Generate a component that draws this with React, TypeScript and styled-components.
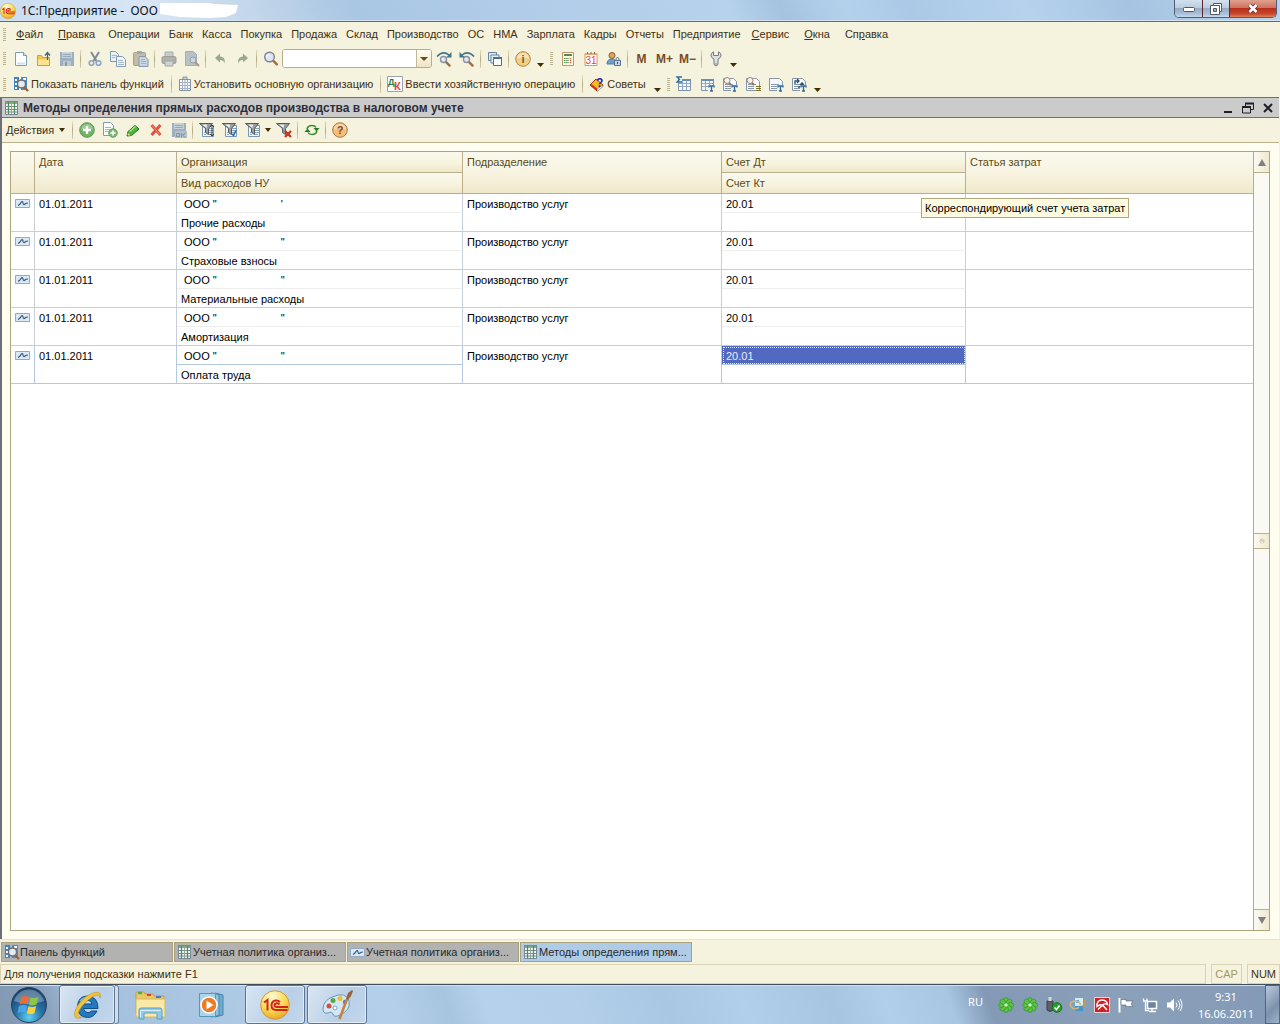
import React, { ReactNode } from 'react';
import styled, { createGlobalStyle, css } from 'styled-components';

const ui = '"Liberation Sans", Arial, sans-serif';
const shell = '"Noto Sans", "Segoe UI", sans-serif';

const Global = createGlobalStyle`
  * { box-sizing: border-box; }
  html, body { margin: 0; height: 100%; }
  body { font: 11px/14px ${ui}; color: #3f3014; background: #f5f2dd; overflow: hidden; }
  button { font: inherit; color: inherit; margin: 0; padding: 0; border: 0; background: none; }
  svg { display: block; flex: none; overflow: visible; }
`;

const Screen = styled.div`
  display: flex;
  flex-direction: column;
  height: 100vh;
`;

/* ---------- application title bar ---------- */

const TitleBar = styled.header`
  display: flex;
  flex: none;
  height: 22px;
  padding-right: 3px;
  border-bottom: 1px solid #566b85;
  box-shadow: inset 0 -1px #d5e4f3;
  background: linear-gradient(
    65deg,
    #c9ddf1 0%, #d8e6f4 12%, #c3d6ea 20%, #a9c6e3 28%, #b0cce8 40%, #b6d2ec 57%,
    #a5c3e0 61%, #b4d1ec 66%, #abc9e6 71%, #b6d2ed 80%, #a6c4e2 88%, #b9d3ec 100%
  );
`;

const AppTitle = styled.h1`
  display: flex;
  flex: 1;
  align-items: center;
  gap: 5px;
  margin: 0;
  font: 12px/20px ${shell};
  color: #10161e;
  white-space: pre;
`;

const Erased = styled.svg`
  margin-left: -8px;
`;

const CaptionButtons = styled.div`
  display: flex;
  height: 18px;
  border: 1px solid #4d5f76;
  border-top: 0;
  border-radius: 0 0 5px 5px;
  overflow: hidden;
`;

const CaptionButton = styled.button<{ $close?: boolean }>`
  display: grid;
  place-items: center;
  width: ${p => (p.$close ? 47 : 27)}px;
  background: ${p =>
    p.$close
      ? 'linear-gradient(#dfa08f 0%, #cf7360 45%, #b8301b 50%, #c8452c 80%, #df8057 100%)'
      : 'linear-gradient(#d3e0ee 0%, #bccde0 45%, #96abc4 50%, #a9bfd8 80%, #c5d8ec 100%)'};
  & + & {
    border-left: 1px solid ${p => (p.$close ? '#5b2a2c' : '#6b7f98')};
  }
`;

/* ---------- menus and toolbars ---------- */

const Bar = styled.div<{ $h: number }>`
  display: flex;
  flex: none;
  align-items: center;
  height: ${p => p.$h}px;
  background: #f5f2dd;
`;

const Grip = styled.span`
  width: 3px;
  height: 13px;
  margin: 0 3px;
  background: repeating-linear-gradient(#bdb491 0 1px, transparent 1px 2px);
`;

const MenuList = styled.nav`
  display: flex;
  align-items: center;
`;

const MenuItem = styled.button<{ $wide?: boolean }>`
  padding: ${p => (p.$wide ? '0 8px 0 7px' : '0 4px 0 5px')};
  line-height: 20px;
  white-space: pre;
`;

const ToolButton = styled.button<{ $dim?: boolean }>`
  display: grid;
  flex: none;
  place-items: center;
  width: 23px;
  height: 22px;
  opacity: ${p => (p.$dim ? 0.75 : 1)};
`;

const TextButton = styled.button<{ $menu?: boolean }>`
  display: flex;
  align-items: center;
  gap: ${p => (p.$menu ? 5 : 2)}px;
  padding: 0 5px 0 4px;
  height: 22px;
  white-space: nowrap;
`;

const Memory = styled(ToolButton)`
  font: bold 12px/14px ${ui};
  color: #7a4b28;
`;

const Divider = styled.span`
  flex: none;
  width: 1px;
  height: 18px;
  margin: 0 2px;
  background: linear-gradient(#e6dfc2, #b3a983, #d8d0ae);
`;

const DropArrow = styled.button<{ $low?: boolean }>`
  display: grid;
  place-items: center;
  width: ${p => (p.$low ? 13 : 8)}px;
  height: 22px;
  padding-top: ${p => (p.$low ? 12 : 0)}px;
`;

const Combo = styled.div`
  display: flex;
  width: 150px;
  height: 19px;
  border: 1px solid #b7ad8a;
  border-radius: 3px;
  background: #fff;
  overflow: hidden;
`;

const ComboInput = styled.input`
  flex: 1;
  min-width: 0;
  border: 0;
  outline: 0;
  padding: 0 4px;
  font: inherit;
`;

const ComboDrop = styled.button`
  display: grid;
  place-items: center;
  width: 15px;
  border-left: 1px solid #c3b994;
  background: linear-gradient(#fffdf3, #ece4c4);
`;

/* ---------- document window ---------- */

const DocWindow = styled.main`
  display: flex;
  flex: 1;
  flex-direction: column;
  min-height: 0;
  margin-right: 1px;
  border: solid #6e6e78;
  border-width: 1px 0 0 2px;
  background: #fffcf0;
`;

const DocTitle = styled.div`
  display: flex;
  flex: none;
  align-items: center;
  gap: 3px;
  height: 20px;
  padding: 0 1px 0 2px;
  border-bottom: 1px solid #6f6f76;
  background: #cbcbcb;
`;

const DocName = styled.h2`
  flex: 1;
  margin: 0;
  font: bold 12px/18px ${ui};
  color: #2b2e38;
`;

const DocButtons = styled.div`
  display: flex;
`;

const DocButton = styled.button`
  display: grid;
  place-items: center;
  width: 20px;
  height: 18px;
`;

const DocTools = styled(Bar)`
  border-bottom: 1px solid #bdb38e;
`;

const GridFrame = styled.div`
  display: flex;
  flex: 1;
  min-height: 0;
  margin: 8px 9px 8px 8px;
  border: 1px solid #aea47f;
  background: #fff;
`;

const GridArea = styled.div`
  flex: 1;
  min-width: 0;
`;

const Table = styled.table`
  width: 100%;
  table-layout: fixed;
  border-collapse: separate;
  border-spacing: 0;
`;

const Col = styled.col<{ $w?: number }>`
  width: ${p => (p.$w ? `${p.$w}px` : 'auto')};
`;

const Th = styled.th<{ $last?: boolean }>`
  height: 21px;
  padding: 3px 4px 0;
  border: solid #b9af8a;
  border-width: 0 ${p => (p.$last ? 0 : 1)}px 1px 0;
  background: linear-gradient(#faf9ee, #f7f3df 55%, #efe8cb);
  font-weight: normal;
  text-align: left;
  vertical-align: top;
  color: #5a4a14;
`;

const Td = styled.td<{ $soft?: boolean; $last?: boolean; $current?: boolean; $selected?: boolean }>`
  position: relative;
  height: 19px;
  padding: 3px 4px 0;
  border: solid ${p => (p.$current ? '#b4c9dc' : '#c8ced6')};
  border-width: 0 ${p => (p.$last ? 0 : 1)}px 1px 0;
  ${p => p.$soft && !p.$current && css`border-bottom-color: #eeeeee;`}
  line-height: 14px;
  vertical-align: top;
  white-space: pre;
  color: #000;
  ${p =>
    p.$selected &&
    css`
      background: #5169c1;
      background-clip: padding-box;
      color: #e6ebff;
      outline: 1px dotted #dfe5ff;
      outline-offset: -2px;
    `}
`;

const RowMark = styled.span`
  display: block;
  padding-top: 2px;
`;

const Blank = styled.span<{ $w: number }>`
  display: inline-block;
  width: ${p => p.$w}px;
`;

const Tooltip = styled.div`
  position: absolute;
  z-index: 2;
  left: 199px;
  top: 4px;
  padding: 2px 3px;
  border: 1px solid #b1a77d;
  background: #fefadf;
  line-height: 14px;
  color: #000;
`;

const Scroll = styled.div`
  display: flex;
  flex-direction: column;
  justify-content: space-between;
  width: 16px;
  border-left: 1px solid #b5ab86;
  background: #faf9f4;
`;

const ScrollPart = styled.button<{ $h: number; $edge: 'top' | 'bottom' | 'both' }>`
  display: grid;
  place-items: center;
  height: ${p => p.$h}px;
  border: solid #b9af8a;
  border-width: ${p => (p.$edge === 'top' ? '0 0 1px' : p.$edge === 'bottom' ? '1px 0 0' : '1px 0')};
  background: linear-gradient(90deg, #fbfaf1, #efe9cf);
`;

/* ---------- open windows, status line ---------- */

const WindowTabs = styled.div`
  display: flex;
  flex: none;
  gap: 1px;
  height: 25px;
  padding: 2px 1px;
  border-top: 1px solid #e2e2de;
`;

const WindowTab = styled.button<{ $active?: boolean }>`
  display: flex;
  align-items: center;
  width: 172px;
  height: 20px;
  padding: 0 2px;
  border: 1px solid #aaa17f;
  background: ${p => (p.$active ? '#b0cbe6' : '#b2b2b1')};
  color: #27292c;
  white-space: nowrap;
`;

const StatusLine = styled.footer`
  display: flex;
  flex: none;
  gap: 5px;
  height: 20px;
`;

const StatusCell = styled.div<{ $grow?: boolean; $dim?: boolean }>`
  flex: ${p => (p.$grow ? '1' : '0 0 auto')};
  min-width: 29px;
  padding: 0 3px;
  border: 1px solid #d9d2b4;
  line-height: 18px;
  color: ${p => (p.$dim ? '#a59764' : '#3f3014')};
`;

/* ---------- system taskbar ---------- */

const Taskbar = styled.div`
  display: flex;
  flex: none;
  height: 40px;
  border-top: 1px solid #3f4d5d;
  box-shadow: inset 0 1px #cfe0f0;
  background: linear-gradient(
    70deg,
    #8198b3 0%, #8aa1bc 4%, #a4bfdb 7%, #b2cde8 24%, #b3cfea 31%, #a8c5e0 35%, #b5d1eb 38%, #b3cfea 45%,
    #a9c7e3 52%, #b1cfea 58%, #a7c4e1 65%, #b1cfea 69%, #a8c6e2 74%, #8399b5 77%, #8ba0b9 88%, #8299b6 100%
  );
`;

const Start = styled.button`
  display: grid;
  place-items: center;
  width: 57px;
`;

const Task = styled.button<{ $w: number; $open?: boolean }>`
  display: grid;
  place-items: center;
  width: ${p => p.$w}px;
  margin-left: 2px;
  border-radius: 3px;
  ${p =>
    p.$open &&
    css`
      border: 1px solid #5c7491;
      box-shadow: inset 0 0 0 1px #e3edf7;
      background: linear-gradient(120deg, #d9e6f3, #b9cfe6 60%, #c3d8ec);
    `}
`;

const TaskStack = styled.span`
  width: 4px;
  border: 1px solid #6b829e;
  border-left: 0;
  border-radius: 0 3px 3px 0;
  background: #d0dfee;
`;

const Tray = styled.div`
  display: flex;
  align-items: center;
  margin-left: auto;
  font: 11px/17px ${shell};
  color: #fff;
`;

const TrayIcons = styled.div`
  display: flex;
  gap: 8px;
  margin: 0 5px 0 15px;
`;

const Language = styled.button`
  padding-bottom: 6px;
`;

const Clock = styled.time`
  width: 78px;
  text-align: center;
`;

const ShowDesktop = styled.button`
  align-self: stretch;
  width: 15px;
  border: 1px solid #52667f;
  background: linear-gradient(135deg, #b8c9db, #7c92ad 60%, #9db3ca);
`;

/* ---------- drawings ---------- */

const Svg = ({ w = 16, h = 16, children }: { w?: number; h?: number; children: ReactNode }) => (
  <svg width={w} height={h} viewBox={`0 0 ${w} ${h}`} fill="none" aria-hidden="true">
    {children}
  </svg>
);

const Down = ({ c = '#3f2c00', w = 7 }: { c?: string; w?: number }) => (
  <svg width={w} height="4" viewBox="0 0 8 4" preserveAspectRatio="none" aria-hidden="true"><path d="M0 0h8L4 4z" fill={c} /></svg>
);

const Sheet = ({ x = 2.5, y = 1.5, w = 10, h = 13, f = '#fdfeff' }) => (
  <path d={`M${x} ${y}h${w - 3}l3 3v${h - 3}h-${w}z`} fill={f} stroke="#7f9bb8" />
);

const Loupe = ({ x = 6.5, y = 6.5, r = 4, c = '#8a8f9c' }) => (
  <>
    <path d={`M${x + r * 0.7} ${y + r * 0.7}l4 4`} stroke="#a56d42" strokeWidth="2.4" strokeLinecap="round" />
    <circle cx={x} cy={y} r={r} fill="#dbe8f3" stroke={c} strokeWidth="1.4" />
    <path d={`M${x - r / 2} ${y}q0-${r / 2} ${r / 2}-${r / 2}`} stroke="#fff" />
  </>
);

const NewIcon = () => <Svg><Sheet w={11} /><path d="M10.500 1.500v3h3" stroke="#7f9bb8" fill="#d5e3f0" /><path d="M4 12.500h8" stroke="#d3e1ef" strokeWidth="2" /></Svg>;
const OpenIcon = () => (
  <Svg>
    <path d="M1.500 14.500v-10h4l1 2h7v8z" fill="#f1c75b" stroke="#d39f35" />
    <path d="M2 8.500h11v5.500H2z" fill="#ffe28c" />
    <path d="M11.500 9V2M9 4.500L11.500 1.500 14 4.500" stroke="#3f6482" strokeWidth="1.300" />
  </Svg>
);
const SaveIcon = ({ ok }: { ok?: boolean }) => (
  <Svg>
    <path d="M1 1h14v14H1z" fill="#9eafc0" />
    <path d="M3 1h10v6H3z" fill="#c5d0d8" />
    <path d="M4 3.500h8M4 5.500h8" stroke="#9aaaba" />
    <path d="M4 10h8v5H4z" fill="#bdc7cf" /><path d="M6 11h2v4H6z" fill="#8698aa" />
    {ok && (
      <>
        <path d="M4 9h12v7H4z" fill="#b4c0ca" />
        <path d="M5.500 11.500h3v3h-3zM10.500 11v4.500M14.500 11l-3 2.200 3 2.300" stroke="#8295a8" />
      </>
    )}
  </Svg>
);
const CutIcon = () => (
  <Svg>
    <path d="M4 1l5.500 9M12 1L6.500 10" stroke="#7d8b98" strokeWidth="2" />
    <circle cx="4.500" cy="12" r="2.300" stroke="#8ba7c3" strokeWidth="1.600" /><circle cx="11.500" cy="12" r="2.300" stroke="#8ba7c3" strokeWidth="1.600" />
  </Svg>
);
const CopyIcon = () => (
  <Svg><Sheet x={0.5} y={0.5} w={8} h={10} f="#e9eff3" /><path d="M2 4.500h5M2 6.500h3" stroke="#a5b6c7" />
    <Sheet x={6.5} y={5.5} w={9} h={10} f="#f4f7f8" /><path d="M8 9.500h5M8 11.500h6M8 13.500h6" stroke="#a5b6c7" /></Svg>
);
const PasteIcon = () => (
  <Svg><rect x=".5" y="1.500" width="12" height="13" rx="1" fill="#c3bca3" stroke="#a7a18c" /><path d="M4 0h5v3H4z" fill="#9ba9b5" />
    <Sheet x={6} y={5.5} w={9} h={10} f="#cbd5dd" /><path d="M8 8.500h4M8 10.500h5M8 12.500h5" stroke="#a5b3c1" /></Svg>
);
const PrintIcon = () => (
  <Svg><path d="M4 1h8v5H4z" fill="#b9bfc6" stroke="#8f989f" /><rect x="1" y="5.500" width="14" height="7" rx="1.500" fill="#96999c" stroke="#7f8386" />
    <path d="M4 10h8v5H4z" fill="#c0cad4" stroke="#878f96" /><path d="M2 8h10" stroke="#b39a90" /></Svg>
);
const PreviewIcon = () => <Svg><Sheet x={1.5} y={0.5} w={11} h={14} f="#a3b2c0" /><circle cx="9" cy="9" r="3" fill="#c0cbd4" stroke="#73869a" /><path d="M11 11l4 4" stroke="#8a7a74" strokeWidth="2.200" /></Svg>;
const UndoIcon = ({ flip }: { flip?: boolean }) => (
  <Svg><g transform={flip ? 'matrix(-1 0 0 1 16 0)' : undefined}><path d="M3 7l5-4.500V5.500c4 .3 5.500 3 4.500 7-.8-2.600-2-3.500-4.500-3.500v2.500z" fill="#9aa992" /></g></Svg>
);
const FindIcon = () => <Svg><Loupe x={6.5} y={6} r={4.8} c="#87808c" /></Svg>;
const FindStep = ({ flip }: { flip?: boolean }) => (
  <Svg><Loupe x={7.5} y={8.5} r={3} /><g transform={flip ? 'matrix(-1 0 0 1 16 0)' : undefined}><path d="M1 5.500Q7-1 13 4" stroke="#41758f" strokeWidth="1.600" /><path d="M15.500 1v5.500H10z" fill="#41758f" /></g></Svg>
);
const WindowsIcon = () => (
  <Svg><path d="M1.500 1.500h8v8h-8z" fill="#dce7f1" stroke="#69859e" /><path d="M4 4h8v8H4z" fill="#e8f0f6" stroke="#69859e" /><path d="M6.500 6.500h8v8h-8z" fill="#f8fbfe" stroke="#4e708e" /><path d="M6 7h9" stroke="#4e708e" strokeWidth="2" /></Svg>
);
const Round = ({ text, a, b, c }: { text: string; a: string; b: string; c: string }) => (
  <Svg><circle cx="8" cy="8" r="7.300" fill={a} stroke={b} /><path d="M2 8a6 6 0 0 1 12 0q-6-3-12 0z" fill="#fff" opacity=".4" />
    <text x="8" y="12" textAnchor="middle" fontFamily="Liberation Sans" fontWeight="bold" fontSize="11" fill={c}>{text}</text></Svg>
);
const PlusIcon = () => (
  <Svg><circle cx="8" cy="8" r="7.300" fill="#72b266" stroke="#5b9a58" /><path d="M2 8a6 6 0 0 1 12 0q-6-3-12 0z" fill="#fff" opacity=".3" /><path d="M8 4v8M4 8h8" stroke="#fff" strokeWidth="2.400" /></Svg>
);
const CalcIcon = () => (
  <Svg><path d="M2.500 1.500h11v13h-11z" fill="#fff8e4" stroke="#bc9a6c" /><path d="M4 4h8" stroke="#568a50" strokeWidth="2" />
    <path d="M4 7.500h5M4 9.500h5M4 11.500h5" stroke="#4c8a4b" strokeDasharray="1.500 .7" /><path d="M10.500 7v6" stroke="#c46b47" strokeWidth="1.500" strokeDasharray="1.300 .7" /></Svg>
);
const CalendarIcon = () => (
  <Svg><path d="M2 2.500h12v12H2z" fill="#fff" stroke="#d9986c" /><path d="M2 3h12" stroke="#e9a878" strokeWidth="2" /><path d="M4.500 1v2M8 1v2M11.500 1v2" stroke="#8c6b50" />
    <text x="8" y="13" textAnchor="middle" fontFamily="Liberation Sans" fontSize="10" fill="#e14a2c">31</text></Svg>
);
const UserIcon = () => (
  <Svg><circle cx="6" cy="4.500" r="3" fill="#e6a64f" stroke="#7e5a33" /><path d="M1 13q0-5 5-5 4 0 4.500 5z" fill="#6fa0c8" stroke="#4f7ea6" />
    <path d="M8.500 9.500h6v5h-6z" fill="#c7d5e0" stroke="#597490" /><path d="M10 9V7.500q1.500-2 3 0V9" stroke="#597490" /><path d="M11.500 11v2" stroke="#35506d" /></Svg>
);
const WrenchIcon = () => (
  <Svg><path d="M5.500.800Q2.500 2 3 5q.5 2 3 3v5.500q2 3 4 0V8q2.500-1 3-3 .5-3-2.500-4.200V4.500h-5z" fill="#dfe1e2" stroke="#777b80" /><circle cx="8" cy="13" r=".8" fill="#777b80" /></Svg>
);
const PanelIcon = () => (
  <Svg><path d="M1 1h5v13H1z" fill="#3e83c5" /><path d="M2 3h2v2H2zM2 7h2v2H2zM2 11h2v2H2z" fill="#fff" /><path d="M8 1h6v13H8z" fill="#4b8ccc" /><path d="M10 2h3v2h-3z" fill="#fff" />
    <path d="M11 11l4 4" stroke="#9c6238" strokeWidth="2.400" /><circle cx="8.500" cy="8" r="4" fill="#e3edf5" stroke="#7c6a67" strokeWidth="1.400" /></Svg>
);
const OrgIcon = () => (
  <Svg w={14}><path d="M1.500 3.500h11v11h-11z" fill="#f7fafd" stroke="#8393a6" /><path d="M5 3V1h4v2" stroke="#8393a6" fill="#cbd5df" /><path d="M2 6.500h10M2 9.500h10M2 12.500h10M4.500 4v10M7 4v10M9.500 4v10" stroke="#a6b6c6" /></Svg>
);
const DtKtIcon = () => (
  <Svg><path d="M.5.500h15v15H.5z" fill="#fff" stroke="#98a3af" /><text x="1" y="9" fontFamily="Liberation Sans" fontWeight="bold" fontSize="9" fill="#23804a">Д</text>
    <text x="7" y="14" fontFamily="Liberation Sans" fontWeight="bold" fontSize="11" fill="#e04634">К</text></Svg>
);
const TipsIcon = () => (
  <Svg><path d="M1 9l6-6 7 6-6 6z" fill="#f6b91c" stroke="#b33b14" /><path d="M1 9l7 6v-2.500L2.500 8z" fill="#c9331a" /><path d="M8 13l6-4v1.500L8 15.500z" fill="#fff" stroke="#6b4226" strokeWidth=".5" />
    <text x="7" y="11" fontFamily="Liberation Sans" fontWeight="bold" fontSize="12" fill="#1d1fb4">?</text></Svg>
);
const TableIcon = () => (
  <Svg><path d="M1 1h13v3H1z" fill="#7fae7a" /><path d="M1.500 1.500h12v13h-12z" stroke="#738a95" /><path d="M2 4h11v10H2z" fill="#f8fbf8" />
    <path d="M2 6.500h11M2 9.500h11M2 12h11" stroke="#718b83" /><path d="M4.500 2v12M10.500 2v12" stroke="#568a61" strokeWidth="1.300" /><path d="M7.500 2v12" stroke="#8fa39e" /></Svg>
);
const WaveIcon = () => (
  <svg width="16" height="9" viewBox="0 0 16 9" fill="none" aria-hidden="true"><path d="M.5.500h14v8H.5z" fill="#dbe8f5" stroke="#92aac2" /><path d="M3 6.500Q5 5.500 6 3.500 7.500 1.500 8 4 8.500 6.500 10 5q1-1 3-1" stroke="#385a7e" strokeWidth="1.200" /></svg>
);

type ReportKind = 'sum' | 'grid' | 'find' | 'list' | 'text' | 'turn';
const reportNames: Record<ReportKind, string> = {
  sum: 'Оборотно-сальдовая ведомость',
  grid: 'Ведомость по счету',
  find: 'Анализ счета',
  list: 'Анализ субконто',
  text: 'Карточка счета',
  turn: 'Обороты счета',
};
const ReportIcon = ({ kind }: { kind: ReportKind }) => (
  <Svg>
    {kind === 'sum' || kind === 'grid' ? (
      <><path d="M2.500 3.500h12v11h-12z" fill="#f5f9fc" stroke="#8094aa" /><path d="M2 4h13" stroke="#6790b8" strokeWidth="2" /><path d="M3 7.500h11M3 10.500h11M6.500 5v9M10.500 5v9" stroke="#92a8be" /></>
    ) : (
      <><path d="M1.500 2.500h10l3 3v9h-13z" fill="#f7fafc" stroke="#8a96a6" /><path d="M3 8.500h8M3 10.500h6M3 12.500h6" stroke="#8799ab" /></>
    )}
    {kind === 'sum' && <path d="M6 1H1l2.500 2.500L1 6h5" fill="#f5f2dd" stroke="#2b6aa3" strokeWidth="1.300" />}
    {(kind === 'find' || kind === 'list') && <><circle cx="5" cy="4.500" r="3" fill="#f6f3e8" stroke="#9c8580" /><path d="M7 7l2 2" stroke="#a2694b" strokeWidth="2" /></>}
    {kind === 'list' && <path d="M11 10.500h5M11 12.500h5M11 14.500h5" stroke="#7d6e28" />}
    {kind === 'turn' && <path d="M4 8V5h4M6 3l2 2-2 2M7 11h4V8M9 9l2-2 2 2" stroke="#314f6d" strokeWidth="1.300" />}
    {kind !== 'sum' && kind !== 'list' && (
      <><path d="M9 9h7v7H9z" fill="#f5f2dd" /><path d="M10 11.500V10h5v1.500M12.500 10v5M11 15h3" stroke="#2b6aa3" strokeWidth="1.300" /></>
    )}
  </Svg>
);

const AddCopyIcon = () => <Svg><Sheet x={1.5} y={0.5} w={10} h={13} /><path d="M3 5.500h6M3 7.500h6M3 9.500h4" stroke="#9fb4c8" /><circle cx="11" cy="11" r="4.200" fill="#7fba76" stroke="#5f9f5b" /><path d="M11 8.500v5M8.500 11h5" stroke="#fff" strokeWidth="1.600" /></Svg>;
const PencilIcon = () => <Svg><path d="M2 14l1-4.500 7-6 4 3.500-7.500 6.500z" fill="#54b23a" stroke="#23771c" /><path d="M4.500 9.500l6-5" stroke="#a9e08f" strokeWidth="1.500" /><path d="M2 14l.8-3 2.700 2.300z" fill="#f3dca4" /><path d="M2 14l.5-1.500 1 1z" fill="#222" /></Svg>;
const CrossIcon = () => <Svg><path d="M3.500 3l9 10M12.500 3l-9 10" stroke="#e0553f" strokeWidth="3" /><path d="M4 3.500l8 9" stroke="#f08a74" /></Svg>;
type FilterKind = 'set' | 'value' | 'history' | 'off';
const FilterIcon = ({ kind }: { kind: FilterKind }) => (
  <Svg>
    {kind !== 'off' && <><path d="M3.500 3.500h11v11h-11z" fill="#f0f6fa" stroke="#7a98b4" /><path d="M10 6.500h4M10 8.500h4M10 10.500h4M10 12.500h3M5 12.500h2M5 10.500h1" stroke="#86a3bd" /></>}
    <path d="M.5 1.500h13L9.500 6.500v6l-3-2v-4z" fill="#9b9fa3" stroke="#55595e" /><path d="M3 2.500h5L7.500 6z" fill="#eceeef" />
    {kind === 'set' && <path d="M13 3v11M11 5l2-2 2 2M11 12l2 2 2-2" stroke="#36393d" />}
    {kind === 'value' && <path d="M10 12l1.500 1.500 2.500-5" stroke="#2f6b9c" strokeWidth="1.500" />}
    {kind === 'off' && <path d="M9 9l6 6M15 9l-6 6" stroke="#c2331f" strokeWidth="2.200" />}
  </Svg>
);
const RefreshIcon = () => (
  <Svg><path d="M3 7q1-3.500 5-3.500 3 0 4 2M13 9q-1 3.500-5 3.500-3 0-4-2" stroke="#3f8e31" strokeWidth="1.600" /><path d="M9.500 6h6L12.500 9.500zM.5 10h6L3.500 6.500z" fill="#2c7a22" /></Svg>
);

const Logo1C = ({ size }: { size: number }) => (
  <svg width={size} height={size} viewBox="0 0 30 30" fill="none" aria-hidden="true">
    <defs><radialGradient id="gold" cx=".4" cy=".2" r=".9"><stop stopColor="#fffbd5" /><stop offset=".55" stopColor="#fbd84f" /><stop offset="1" stopColor="#e09a1d" /></radialGradient></defs>
    <circle cx="15" cy="15" r="14.300" fill="url(#gold)" stroke="#cf9a3d" />
    <path d="M4 12.500L7.500 10v10.500M20 12q-2-2-4.500-1.500-4 1-4 4.800.2 4.700 4.500 4.700h11.500M19.500 14.500q-1-1.500-3-1.200-2 .5-2 2 .3 1.700 2.300 1.700H28" stroke="#d4231c" strokeWidth="2" />
  </svg>
);

const StartOrb = () => (
  <svg width="38" height="38" viewBox="0 0 38 38" fill="none" aria-hidden="true">
    <defs><radialGradient id="orb" cx=".5" cy=".85" r=".85"><stop stopColor="#5fd0f2" /><stop offset=".45" stopColor="#2771a4" /><stop offset="1" stopColor="#173b63" /></radialGradient></defs>
    <circle cx="19" cy="19" r="17.500" fill="url(#orb)" stroke="#28415c" />
    <path d="M4 15a15.500 15.500 0 0 1 30 0q-15 6-30 0z" fill="#fff" opacity=".3" />
    <path d="M11.500 11q3.500-2 7.500 0l-1.500 7.500q-4-1.800-8 0z" fill="#ee6a37" /><path d="M20.500 11.500q4 1.500 8-.5L26.500 18.500q-4 2-7.500.2z" fill="#8fc549" />
    <path d="M9 20q4-1.800 8 0l-1.500 7q-4-1.800-8 0z" fill="#4aa4e4" /><path d="M18.500 20.300q4 1.700 7.700-.3l-1.800 7.200q-4 2-7.500 0z" fill="#fbcf3c" />
  </svg>
);
const IeIcon = () => (
  <Svg w={32} h={32}>
    <path d="M26 22q-3 6.500-9.500 6.500Q6.500 28 6.500 17.500 7 7 16.500 7q10.500.5 10.500 12.500H12.500q.5 4 4.500 4.200 2 0 3.500-1.700z M12.800 15h8.200q-.7-3.800-4.200-3.800t-4 3.800z" fill="#2379bd" stroke="#0f4d88" fillRule="evenodd" />
    <path d="M9 12q3.500-4 9-3.500" stroke="#80c4ee" strokeWidth="1.500" />
    <path d="M29 9q2-7-5.500-5.500Q14 6 7 16q-5.500 9-2.500 12.500 2.500 2 7-.5-4 1-4.500-1.500-.5-4 5-10.500Q21 6.500 26.500 6q2.500 0 2.500 3z" fill="#f3c33a" stroke="#c38e20" strokeWidth=".6" />
  </Svg>
);
const FolderIcon = () => (
  <Svg w={34} h={32}>
    <path d="M3 25V4q0-1 1-1h7l1 2h8l1 2h10v18z" fill="#ecc766" stroke="#c69d45" /><path d="M5 4h4" stroke="#4caf4f" strokeWidth="2.500" /><path d="M14 6h4" stroke="#c74b36" strokeWidth="2" /><path d="M23 8h5" stroke="#4180c4" strokeWidth="2" />
    <path d="M3 10h29v18H3z" fill="#fbe9a8" stroke="#d9b665" /><path d="M6 30V21q0-2 2-2h19q2 0 2 2v9h-5v-5q0-1-1-1H12q-1 0-1 1v5z" fill="#8fcbe6" stroke="#5a9fc6" /><path d="M7.500 28v-6.500h20" stroke="#d7f0fa" />
  </Svg>
);
const PlayerIcon = () => (
  <Svg w={32} h={32}>
    <path d="M19 4l8 2v20l-8 2z" fill="#70aacd" stroke="#4585ad" /><path d="M15 4l8 1.500v21L15 28z" fill="#8fc3e0" stroke="#4585ad" /><path d="M3.500 4.500h16v23h-16z" fill="#a9d4ea" stroke="#5698bd" />
    <circle cx="13" cy="16" r="8" fill="#ee7b22" stroke="#fff" strokeWidth="1.500" /><path d="M10.500 11.500v9l7-4.500z" fill="#fff" />
  </Svg>
);
const PaintIcon = () => (
  <Svg w={34} h={34}>
    <path d="M12 9Q26 3 29 13q2 9-9 14-6 3-7-1-1-3-5-1-5 1-5-4Q3 13 12 9z" fill="#d4e7f5" stroke="#6796bb" /><circle cx="9" cy="18" r="2.500" fill="#d94b3d" /><circle cx="13" cy="12.500" r="2.500" fill="#56a74b" /><circle cx="20" cy="10.500" r="2.500" fill="#edbd35" /><circle cx="25" cy="14" r="2.200" fill="#4d7fc9" /><circle cx="15" cy="20" r="2" fill="#fff" stroke="#7aa5c5" />
    <path d="M19.500 31L27 11" stroke="#c9803e" strokeWidth="2.600" /><path d="M26 11l2-6 4-3 1 1-2 5-3 4z" fill="#9c6238" />
  </Svg>
);

const CloverIcon = () => (
  <Svg>
    {[0, 45, 90, 135, 180, 225, 270, 315].map(a => (
      <ellipse key={a} cx="8" cy="3.500" rx="2.300" ry="3" fill="#5cc443" stroke="#2f8c27" strokeWidth=".6" transform={`rotate(${a} 8 8)`} />
    ))}
    <circle cx="8" cy="8" r="1.800" fill="#d5f0b4" />
  </Svg>
);
const UsbIcon = () => <Svg><path d="M1 4h6v9q-3 3-6 0z" fill="#5c6167" stroke="#3b4046" /><path d="M2.500 0h3v4h-3z" fill="#d5d8db" /><circle cx="11" cy="10.500" r="4.800" fill="#28a02e" stroke="#15701c" /><path d="M8.500 10.500l2 2 3-4" stroke="#fff" strokeWidth="1.600" /></Svg>;
const UpdateIcon = () => <Svg><path d="M4.500.500h9v14h-9z" fill="#d8ecf8" stroke="#6ca6c9" /><path d="M5 9h8v5H5z" fill="#3f97d1" /><path d="M6 3.500h3M6 5.500h3" stroke="#5ba7d6" /><path d="M1 9.500a5 3.500 0 1 1 9-1M1 9.500q3 4 8 1" stroke="#d9b078" strokeWidth="1.600" /><path d="M15 3q1 5-3 6" stroke="#e0952c" strokeWidth="1.600" /></Svg>;
const AviraIcon = () => <Svg><path d="M.5.500h15v15H.5z" fill="#cf2027" stroke="#f0d5d2" /><path d="M3 9.500q-.5-5.500 4-6.500 5.500-.5 6.500 4.500-2.500-1.500-5 .5Q5.500 7 3 9.500zM8.500 8L4 12.500M8.500 8l4.500 5" stroke="#fff" strokeWidth="1.400" /></Svg>;
const FlagIcon = () => <Svg><path d="M1.500 1v14.500" stroke="#fff" strokeWidth="2" /><path d="M3 2.500h5v1.500h7l-2 3 2 2.500H8V8H3z" fill="#fff" stroke="#4f5f73" strokeWidth=".6" /></Svg>;
const NetIcon = () => <Svg><path d="M5.500 4.500h9v7h-9z" fill="#6e8299" stroke="#fff" strokeWidth="1.500" /><path d="M7 14.500h7M10 12v2M1 4h5M3.500 5v8.500H7M1.500 1.500v3M5 1.500v3" stroke="#fff" strokeWidth="1.300" /></Svg>;
const SoundIcon = () => <Svg><path d="M1 5.500h3L8 1.500v13L4 10.500H1z" fill="#fff" /><path d="M10 5.500q2 2.500 0 5M12 3.500q3.500 4.500 0 9M14 2q4 6 0 12" stroke="#fff" /></Svg>;

/* ---------- data ---------- */

const menu: { text: string; key?: number; wide?: boolean }[] = [
  { text: 'Файл', key: 0, wide: true },
  { text: 'Правка', key: 0, wide: true },
  { text: 'Операции' }, { text: 'Банк' }, { text: 'Касса' }, { text: 'Покупка' }, { text: 'Продажа' }, { text: 'Склад' },
  { text: 'Производство' }, { text: 'ОС' }, { text: 'НМА' }, { text: 'Зарплата' }, { text: 'Кадры' }, { text: 'Отчеты' }, { text: 'Предприятие' },
  { text: 'Сервис', key: 0, wide: true }, { text: 'Окна', key: 0, wide: true }, { text: 'Справка', key: 2, wide: true },
];

const records = ['Прочие расходы', 'Страховые взносы', 'Материальные расходы', 'Амортизация', 'Оплата труда'];
const reports: ReportKind[] = ['sum', 'grid', 'find', 'list', 'text', 'turn'];

const openWindows = [
  { icon: <PanelIcon />, text: 'Панель функций' },
  { icon: <TableIcon />, text: 'Учетная политика организ...' },
  { icon: <WaveIcon />, text: 'Учетная политика организ...' },
  { icon: <TableIcon />, text: 'Методы определения прям...', active: true },
];

const Tool = ({ label, children, dim }: { label: string; children: ReactNode; dim?: boolean }) => (
  <ToolButton aria-label={label} $dim={dim}>{children}</ToolButton>
);

const Label = ({ text, at }: { text: string; at?: number }) =>
  at === undefined ? <>{text}</> : <>{text.slice(0, at)}<u>{text[at]}</u>{text.slice(at + 1)}</>;

export default function App() {
  return (
    <Screen>
      <Global />
      <TitleBar>
        <AppTitle>
          <Logo1C size={16} />
          {'1С:Предприятие -  ООО '}
          <Erased width="80" height="17" viewBox="0 0 80 17" aria-hidden="true">
            <path d="M2 1h50l3 1 25 1-2 8-10 4-16 1-30-1-20-3z" fill="#fff" />
          </Erased>
        </AppTitle>
        <CaptionButtons>
          <CaptionButton aria-label="Свернуть"><Svg w={12} h={6}><rect x=".5" y="1.500" width="11" height="4" rx="1" fill="#fff" stroke="#4f5a69" /></Svg></CaptionButton>
          <CaptionButton aria-label="Восстановить"><Svg w={12} h={12}><path d="M3.500.500h8v8h-8z" fill="#fff" stroke="#4f5a69" /><path d="M.5 2.500h9v9h-9z" fill="#fff" stroke="#4f5a69" /><path d="M3.500 5.500h3v3h-3z" fill="#9fb2c9" stroke="#4f5a69" /></Svg></CaptionButton>
          <CaptionButton aria-label="Закрыть" $close><Svg w={12} h={11}><path d="M2.500 2l7 7M9.500 2l-7 7" stroke="#5d3236" strokeWidth="4.200" /><path d="M2.500 2l7 7M9.500 2l-7 7" stroke="#fff" strokeWidth="2.600" /></Svg></CaptionButton>
        </CaptionButtons>
      </TitleBar>

      <Bar $h={24}>
        <Grip />
        <MenuList>
          {menu.map(m => <MenuItem key={m.text} $wide={m.wide}><Label text={m.text} at={m.key} /></MenuItem>)}
        </MenuList>
      </Bar>

      <Bar $h={25}>
        <Grip />
        <Tool label="Новый"><NewIcon /></Tool>
        <Tool label="Открыть"><OpenIcon /></Tool>
        <Tool label="Сохранить"><SaveIcon /></Tool>
        <Divider />
        <Tool label="Вырезать"><CutIcon /></Tool>
        <Tool label="Копировать"><CopyIcon /></Tool>
        <Tool label="Вставить"><PasteIcon /></Tool>
        <Divider />
        <Tool label="Печать" dim><PrintIcon /></Tool>
        <Tool label="Просмотр" dim><PreviewIcon /></Tool>
        <Divider />
        <Tool label="Отменить"><UndoIcon /></Tool>
        <Tool label="Повторить"><UndoIcon flip /></Tool>
        <Divider />
        <Tool label="Найти"><FindIcon /></Tool>
        <Combo>
          <ComboInput aria-label="Строка поиска" />
          <ComboDrop aria-label="История поиска"><Down c="#6a4a12" w={8} /></ComboDrop>
        </Combo>
        <Tool label="Найти следующий"><FindStep /></Tool>
        <Tool label="Найти предыдущий"><FindStep flip /></Tool>
        <Divider />
        <Tool label="Окна"><WindowsIcon /></Tool>
        <Divider />
        <Tool label="Справка"><Round text="i" a="#f3cf86" b="#b58748" c="#5f6a2d" /></Tool>
        <DropArrow aria-label="Ещё" $low><Down /></DropArrow>
        <Grip />
        <Tool label="Калькулятор"><CalcIcon /></Tool>
        <Tool label="Календарь"><CalendarIcon /></Tool>
        <Tool label="Пользователь"><UserIcon /></Tool>
        <Divider />
        <Memory>M</Memory>
        <Memory>M+</Memory>
        <Memory>M−</Memory>
        <Divider />
        <Tool label="Настройка"><WrenchIcon /></Tool>
        <DropArrow aria-label="Ещё" $low><Down /></DropArrow>
      </Bar>

      <Bar $h={26}>
        <Grip />
        <TextButton><PanelIcon />Показать панель функций</TextButton>
        <Divider />
        <TextButton><OrgIcon />Установить основную организацию</TextButton>
        <Divider />
        <TextButton><DtKtIcon />Ввести хозяйственную операцию</TextButton>
        <Divider />
        <TextButton><TipsIcon />Советы</TextButton>
        <DropArrow aria-label="Ещё" $low><Down /></DropArrow>
        <Grip />
        {reports.map(k => <Tool key={k} label={reportNames[k]}><ReportIcon kind={k} /></Tool>)}
        <DropArrow aria-label="Ещё" $low><Down /></DropArrow>
      </Bar>

      <DocWindow>
        <DocTitle>
          <TableIcon />
          <DocName>Методы определения прямых расходов производства в налоговом учете</DocName>
          <DocButtons>
            <DocButton aria-label="Свернуть окно"><Svg w={8} h={12}><path d="M0 10h8" stroke="#1e2026" strokeWidth="2" /></Svg></DocButton>
            <DocButton aria-label="Восстановить окно"><Svg w={12} h={12}><path d="M3.500 4V1.500h8v6H9" stroke="#1e2026" /><path d="M3 1.500h9M0 5h9" stroke="#1e2026" strokeWidth="2" /><path d="M.5 5v6h8V5" stroke="#1e2026" /></Svg></DocButton>
            <DocButton aria-label="Закрыть окно"><Svg w={10} h={10}><path d="M1 1l8 8M9 1L1 9" stroke="#1e2026" strokeWidth="2" /></Svg></DocButton>
          </DocButtons>
        </DocTitle>
        <DocTools $h={25}>
          <TextButton $menu>Действия<Down w={6} /></TextButton>
          <Divider />
          <Tool label="Добавить"><PlusIcon /></Tool>
          <Tool label="Добавить копированием"><AddCopyIcon /></Tool>
          <Tool label="Изменить"><PencilIcon /></Tool>
          <Tool label="Удалить"><CrossIcon /></Tool>
          <Tool label="Записать"><SaveIcon ok /></Tool>
          <Divider />
          <Tool label="Отбор и сортировка"><FilterIcon kind="set" /></Tool>
          <Tool label="Отбор по значению"><FilterIcon kind="value" /></Tool>
          <Tool label="История отборов"><FilterIcon kind="history" /></Tool>
          <DropArrow aria-label="Список отборов"><Down w={6} /></DropArrow>
          <Tool label="Отключить отбор"><FilterIcon kind="off" /></Tool>
          <Divider />
          <Tool label="Обновить"><RefreshIcon /></Tool>
          <Divider />
          <Tool label="Помощь"><Round text="?" a="#f6bd79" b="#ad7b4c" c="#7d4422" /></Tool>
        </DocTools>

        <GridFrame>
          <GridArea>
            <Table>
              <colgroup><Col $w={24} /><Col $w={142} /><Col $w={286} /><Col $w={259} /><Col $w={244} /><Col /></colgroup>
              <thead>
                <tr>
                  <Th rowSpan={2} aria-label="Вид записи" />
                  <Th rowSpan={2}>Дата</Th>
                  <Th>Организация</Th>
                  <Th rowSpan={2}>Подразделение</Th>
                  <Th>Счет Дт</Th>
                  <Th rowSpan={2} $last>Статья затрат</Th>
                </tr>
                <tr><Th>Вид расходов НУ</Th><Th>Счет Кт</Th></tr>
              </thead>
              <tbody>
                {records.map((kind, i) => {
                  const current = i === records.length - 1;
                  return (
                    <React.Fragment key={kind}>
                      <tr>
                        <Td rowSpan={2} $current={current}><RowMark><WaveIcon /></RowMark></Td>
                        <Td rowSpan={2} $current={current}>01.01.2011</Td>
                        <Td $soft $current={current}>{' ООО "'}<Blank $w={64} />{i === 0 ? "'" : '"'}</Td>
                        <Td rowSpan={2} $current={current}>Производство услуг</Td>
                        <Td $soft $current={current} $selected={current}>
                          20.01
                          {i === 0 && <Tooltip role="tooltip">Корреспондирующий счет учета затрат</Tooltip>}
                        </Td>
                        <Td rowSpan={2} $last $current={current} />
                      </tr>
                      <tr><Td $current={current}>{kind}</Td><Td $current={current} /></tr>
                    </React.Fragment>
                  );
                })}
              </tbody>
            </Table>
          </GridArea>
          <Scroll>
            <ScrollPart $h={21} $edge="top" aria-label="Вверх"><Svg w={8} h={7}><path d="M4 0l4 7H0z" fill="#808080" /></Svg></ScrollPart>
            <ScrollPart $h={16} $edge="both" aria-label="Ползунок"><Svg w={6} h={6}><circle cx="3" cy="3" r="2.500" fill="#d6d0b8" /><path d="M2 3.500q.5 1.500 2 1" stroke="#fff" /></Svg></ScrollPart>
            <ScrollPart $h={21} $edge="bottom" aria-label="Вниз"><Svg w={8} h={7}><path d="M0 0h8L4 7z" fill="#808080" /></Svg></ScrollPart>
          </Scroll>
        </GridFrame>
      </DocWindow>

      <WindowTabs>
        {openWindows.map((w, i) => <WindowTab key={i} $active={w.active}>{w.icon}{w.text}</WindowTab>)}
      </WindowTabs>
      <StatusLine>
        <StatusCell $grow>Для получения подсказки нажмите F1</StatusCell>
        <StatusCell $dim>CAP</StatusCell>
        <StatusCell>NUM</StatusCell>
      </StatusLine>

      <Taskbar>
        <Start aria-label="Пуск"><StartOrb /></Start>
        <Task $w={56} $open aria-label="Internet Explorer"><IeIcon /></Task>
        <TaskStack />
        <Task $w={58} aria-label="Проводник"><FolderIcon /></Task>
        <Task $w={62} aria-label="Проигрыватель"><PlayerIcon /></Task>
        <Task $w={60} $open aria-label="1С:Предприятие"><Logo1C size={30} /></Task>
        <Task $w={60} $open aria-label="Paint"><PaintIcon /></Task>
        <Tray>
          <Language>RU</Language>
          <TrayIcons>
            <CloverIcon /><CloverIcon /><UsbIcon /><UpdateIcon /><AviraIcon /><FlagIcon /><NetIcon /><SoundIcon />
          </TrayIcons>
          <Clock>9:31<br />16.06.2011</Clock>
          <ShowDesktop aria-label="Показать рабочий стол" />
        </Tray>
      </Taskbar>
    </Screen>
  );
}
